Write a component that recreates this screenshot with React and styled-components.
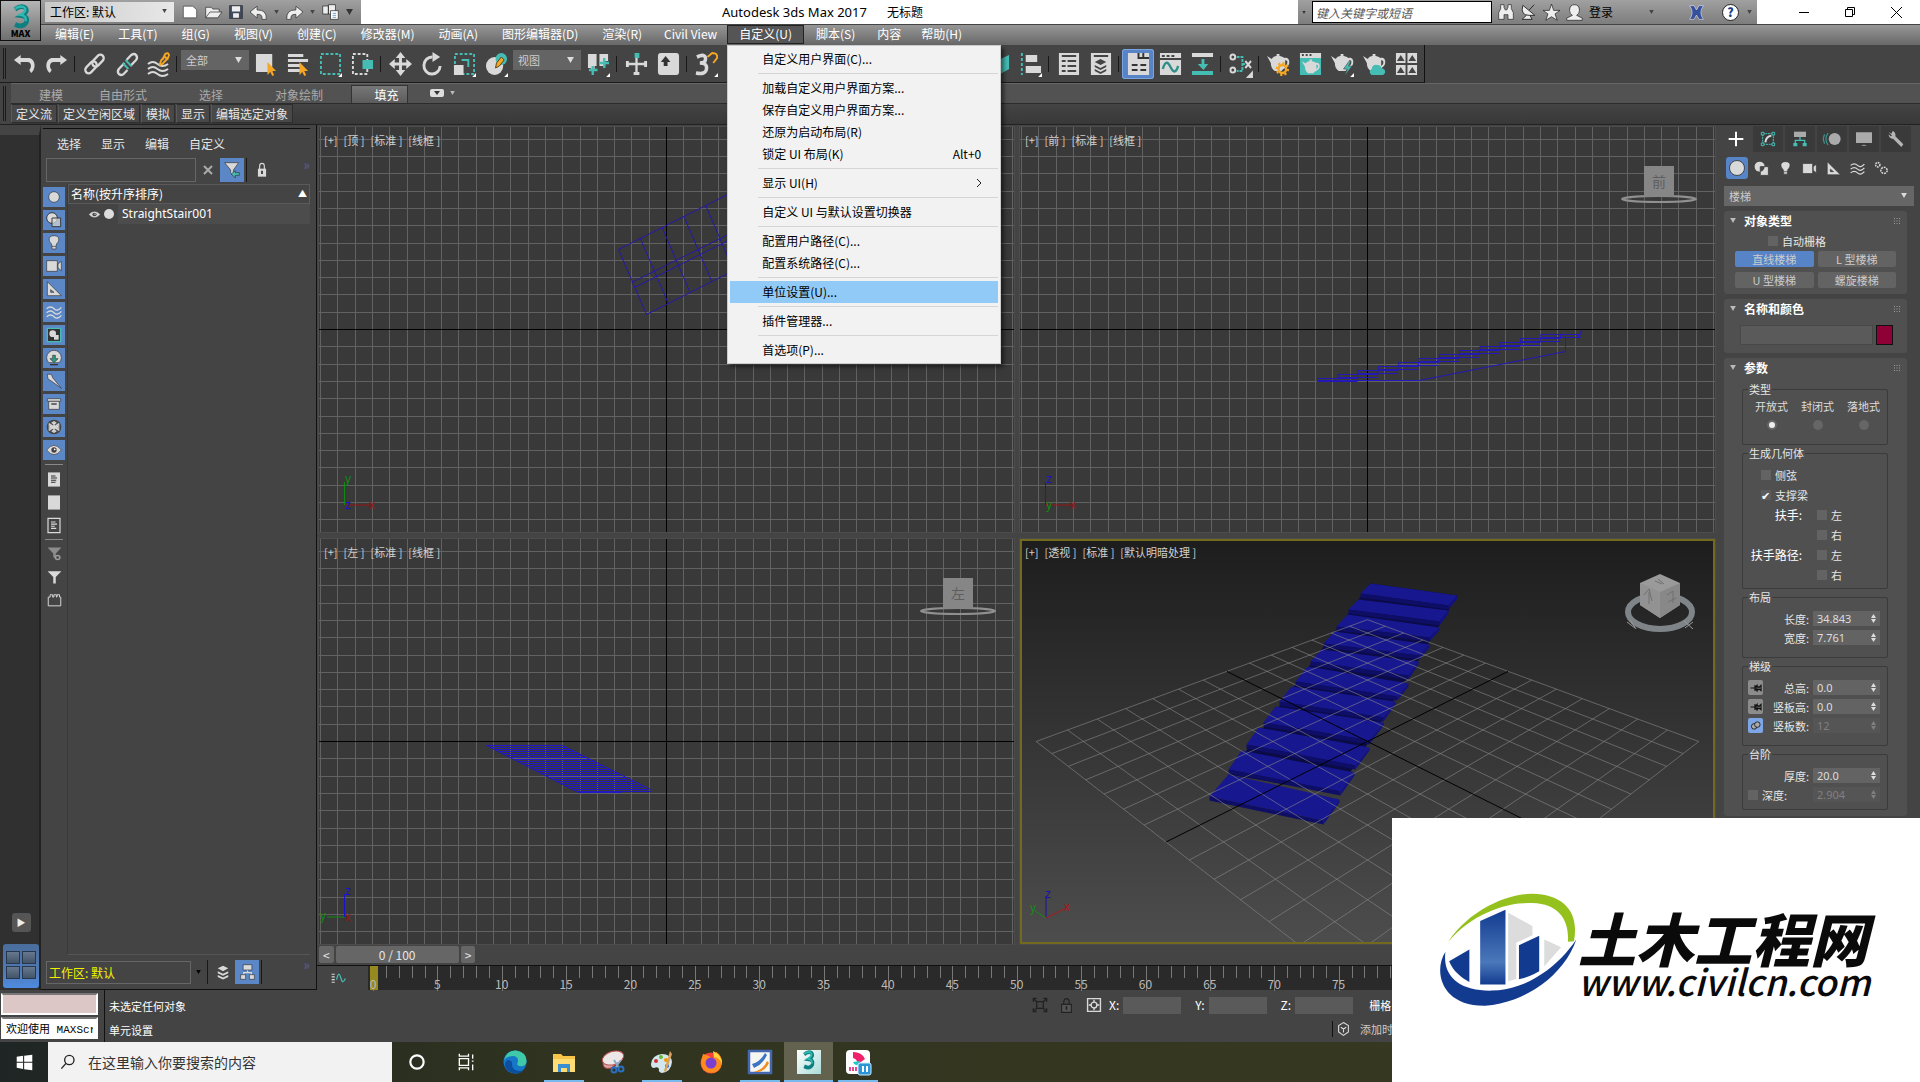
import React, { useState } from 'react'
import styled, { createGlobalStyle, css } from 'styled-components'

const GlobalStyle = createGlobalStyle`
  * {
    box-sizing: border-box;
  }
  body {
    margin: 0;
    background: #444;
    color: #e6e6e6;
    font: 12px/16px 'Noto Sans CJK SC', sans-serif;
  }
  button, input, select {
    font: inherit;
    color: inherit;
    border: 0;
    border-radius: 0;
    padding: 0;
    margin: 0;
    background: none;
    outline: none;
  }
  svg {
    display: block;
    flex: none;
  }
`

const TEAL = '#45bdb5'
const LIGHT = '#d9d9d9'
const ORANGE = '#f5a623'

/* ---------- icons ---------- */

const cursor = <path d="M13 10v13l3-3 2 4 2-1-2-4h4z" fill={ORANGE} />
const corner = <path d="M24 21v4h-4z" fill="#fff" />
const teapot = (
  <path d="M0 4l5 3c1-2 3-3 5-3V2h3v2c2 0 4 1 5 2 4-1 6 2 5 6-1 3-4 4-6 5l-2 2H8C5 17 4 14 4 11zM19 8v6q3-2 2-5z" fill={LIGHT} fillRule="evenodd" />
)

const icons = {
  undo: <path d="M8 3L1 8l7 5V10h7c4 0 5 5 2 8l2 3c6-5 4-15-3-15H8z" fill={LIGHT} />,
  redo: <path d="M16 3l7 5-7 5V10H9c-4 0-5 5-2 8l-2 3C-1 16 1 6 8 6h8z" fill={LIGHT} />,
  link: (
    <g fill="none" stroke={LIGHT} strokeWidth="2.4">
      <rect x="1" y="12" width="14" height="7" rx="3.5" transform="rotate(-45 8 15)" />
      <rect x="9" y="5" width="14" height="7" rx="3.5" transform="rotate(-45 16 9)" />
    </g>
  ),
  unlink: (
    <g fill="none" stroke={LIGHT} strokeWidth="2.4">
      <path d="M10 11l-6 6q-2 3 0 5q3 2 5 0l4-4M12 8l5-5q3-2 5 0q2 3 0 5l-6 6" />
      <path d="M11 8l6 6M8 11l6 6" stroke={TEAL} strokeWidth="2" />
    </g>
  ),
  bind: (
    <g fill="none" strokeWidth="2">
      <path d="M1 12q5-4 10 0t11 0M1 17q5-4 10 0t11 0M1 22q5-4 10 0t11 0" stroke={LIGHT} />
      <path d="M13 13l2-5 3-3q3 0 2 3l-4 4-3 1M16 8l3-6q3-2 4 1l-2 5" stroke={ORANGE} />
    </g>
  ),
  selectObject: <g><path d="M1 2h17v18H1z" fill={LIGHT} />{cursor}</g>,
  selectName: <g><path d="M1 2h16v3H1zM1 7h21v3H1zM1 12h13v3H1zM1 17h13v3H1z" fill={LIGHT} />{cursor}</g>,
  region: <g><path d="M2 2h20v20H2z" fill="none" stroke={TEAL} strokeWidth="2" strokeDasharray="3 2" />{corner}</g>,
  crossing: (
    <g>
      <path d="M2 2h15v20H2z" fill="none" stroke={LIGHT} strokeWidth="2" strokeDasharray="3 2" />
      <path d="M12 8h11v9H12z" fill={TEAL} />
    </g>
  ),
  move: <path d="M12 0l5 6h-3.500v4.500H18V7l6 5-6 5v-3.500h-4.500V18H17l-5 6-5-6h3.500v-4.500H6V17l-6-5 6-5v3.500h4.500V6H7z" fill={LIGHT} />,
  rotate: (
    <g fill="none" stroke={LIGHT} strokeWidth="3">
      <path d="M12 5A8.500 8.500 0 1 0 20 14" />
      <path d="M12 0v10l8-5z" fill={LIGHT} stroke="none" />
    </g>
  ),
  scale: (
    <g>
      <path d="M2 2h20v20H2z" fill="none" stroke={TEAL} strokeWidth="2" strokeDasharray="3 2" />
      <path d="M1 13h10v10H1z" fill={LIGHT} />
      <path d="M9 8h7v7" fill="none" stroke={TEAL} strokeWidth="2" />
      {corner}
    </g>
  ),
  place: (
    <g>
      <circle cx="10" cy="14" r="9" fill={LIGHT} />
      <circle cx="17" cy="7" r="6" fill={TEAL} />
      <path d="M11 16l1-5 5-6 3 3-5 6z" fill={ORANGE} stroke="#5b4310" />
      {corner}
    </g>
  ),
  pivot: (
    <g>
      <path d="M1 2h9v12H8v5H4v-3H1zM13 2h9v7h-3v5h-6z" fill={LIGHT} />
      <path d="M6 14v9M2 18h9M18 6v10M13 11h10" stroke={TEAL} strokeWidth="2.500" />
      {corner}
    </g>
  ),
  manipulate: (
    <g>
      <path d="M12 5v18M1 12h22" stroke={LIGHT} strokeWidth="2.400" />
      <path d="M10 1h5v5h-5z" fill={TEAL} />
      <path d="M1 9h3v6H1zM20 9h3v6h-3zM9 20h6v3H9z" fill={LIGHT} />
    </g>
  ),
  keyboard: (
    <g>
      <rect x="1" y="1" width="22" height="22" rx="3" fill={LIGHT} />
      <path d="M9 4l5 6h-3v4H7v-4H4z" fill="#333" />
    </g>
  ),
  snap: (
    <g>
      <path d="M2 5q9-4 9 2q0 4-6 4q8 0 7 6q-1 6-11 4" fill="none" stroke={LIGHT} strokeWidth="3.600" />
      <path d="M13 5l5-4q6 0 5 5l-4 5" fill="none" stroke={ORANGE} strokeWidth="2" />
      {corner}
    </g>
  ),
  mirror: <g><path d="M1 7l9-4v16l-9 4z" fill={LIGHT} /><path d="M14 7l9-4v14l-9 5z" fill={TEAL} /></g>,
  align: (
    <g>
      <path d="M3 1v22" stroke={TEAL} strokeWidth="2" strokeDasharray="3 2" />
      <path d="M7 3h12v7H7zM7 14h16v7H7z" fill={LIGHT} />
      {corner}
    </g>
  ),
  layers: (
    <g>
      <path d="M2 1h21v22H2z" fill={LIGHT} />
      <path d="M5 4h15M5 9h4M11 9h9M5 14h4M11 14h9M5 19h4M11 19h9" stroke="#444" strokeWidth="2" />
    </g>
  ),
  layerStack: (
    <g>
      <path d="M2 1h21v22H2z" fill={LIGHT} />
      <path d="M5 4h15" stroke="#444" strokeWidth="2" />
      <path d="M12 7l6 3-6 3-6-3zM6 13l6 3 6-3v2l-6 3-6-3zM6 17l6 3 6-3v2l-6 3-6-3z" fill="#444" />
    </g>
  ),
  ribbon: (
    <g>
      <path d="M1 1h22v22H1z" fill={LIGHT} />
      <path d="M12 1v5h11M17 1v5M5 13h6M14 13h6M5 18h6M14 18h6" fill="none" stroke="#333" strokeWidth="2" />
    </g>
  ),
  curve: (
    <g>
      <path d="M1 1h22v22H1z" fill={LIGHT} />
      <path d="M3 4h3M8 4h3M13 4h3M1 7h22" stroke="#444" strokeWidth="2" />
      <path d="M4 17c3-10 6-6 8-2s5 8 8-1" fill="none" stroke="#2f8f88" strokeWidth="2.400" />
    </g>
  ),
  dope: (
    <g>
      <path d="M1 1h22v4H1z" fill={LIGHT} />
      <path d="M1 19h22v4H1zM11 7h3v5h4l-5 6-6-6h4z" fill={TEAL} />
    </g>
  ),
  schematic: (
    <g fill="none" stroke={LIGHT} strokeWidth="2">
      <circle cx="4" cy="5" r="2.500" />
      <circle cx="4" cy="18" r="2.500" />
      <path d="M8 5h6v14H8M14 12h3" stroke={TEAL} strokeDasharray="3 1" />
      <path d="M17 9l6 7M23 9l-6 7" />
      {corner}
    </g>
  ),
  renderSetup: (
    <g>
      {teapot}
      <circle cx="16" cy="17" r="4" fill="none" stroke={ORANGE} strokeWidth="2.500" />
      <circle cx="16" cy="17" r="6" fill="none" stroke={ORANGE} strokeWidth="2" strokeDasharray="2.300 2.300" />
    </g>
  ),
  renderFrame: (
    <g>
      <path d="M1 1h22v22H1z" fill={TEAL} />
      <path d="M1 1h22v5H1z" fill={LIGHT} />
      <path d="M3 3h2M7 3h2M11 3h2" stroke="#444" strokeWidth="2" />
      <g transform="translate(3 6) scale(.8)">{teapot}</g>
    </g>
  ),
  renderBolt: <g>{teapot}<path d="M19 9l-6 8h4l-3 7 8-10h-4l3-5z" fill={TEAL} stroke="#444" strokeWidth=".6" />{corner}</g>,
  renderCloud: <g>{teapot}<path d="M9 23q-4-3 0-6q1-5 6-4q4 0 4 3q5 1 4 5l-2 2z" fill={TEAL} /></g>,
  gallery: (
    <g>
      <path d="M1 1h10v10H1zM13 1h10v10H13zM1 13h10v10H1zM13 13h10v10H13z" fill={LIGHT} />
      <path d="M2 9l4-6 4 6zM14 9l4-6 4 6zM2 21l4-6 4 6zM14 21l4-6 4 6z" fill="#444" />
    </g>
  ),
  // scene explorer filters
  circle: <circle cx="12" cy="12" r="8" fill={LIGHT} stroke="#333" />,
  shapes: <g stroke="#333" strokeWidth="1.400"><circle cx="9" cy="9" r="8" fill={LIGHT} /><path d="M9 9h13v13H9z" fill={LIGHT} fillOpacity=".7" /></g>,
  bulb: <path d="M12 1c10 0 8 9 4 12l-1 4v4H9v-4l-1-4C4 10 2 1 12 1zM9 17h6" fill={LIGHT} stroke="#333" />,
  camera: <path d="M1 4h16v16H1zM18 9l5-4v14l-5-4z" fill={LIGHT} stroke="#333" />,
  ruler: <path d="M2 1l21 21H2zM7 13v4h5z" fill={LIGHT} fillRule="evenodd" stroke="#333" />,
  waves: (
    <g fill="none" stroke={LIGHT} strokeWidth="2">
      <path d="M1 7q6-5 11 0t11-2M1 13q6-5 11 0t11-2M1 19q6-5 11 0t11-2" />
    </g>
  ),
  groups: (
    <g>
      <path d="M2 2h20v20H2z" fill="#333" stroke={TEAL} strokeWidth="2" />
      <circle cx="10" cy="10" r="5" fill={LIGHT} />
      <path d="M12 12h7v7h-7z" fill={LIGHT} />
    </g>
  ),
  xref: (
    <g>
      <path d="M4 19a11 11 0 1 1 16 0z" fill={LIGHT} stroke="#333" />
      <path d="M10 8h4v5h4l-6 6-6-6h4z" fill="#2f9d7f" stroke="#333" />
      <path d="M6 22h12" stroke="#333" strokeWidth="2" />
    </g>
  ),
  bone: <path d="M2 2h6l2 5 13 16L8 12 3 9z" fill={LIGHT} stroke="#333" />,
  container: <g><path d="M2 4h20v4H2z" fill={LIGHT} stroke="#333" /><path d="M4 8h16v12H4z" fill={LIGHT} stroke="#333" /><path d="M8 12h8" stroke="#333" strokeWidth="2" /></g>,
  frozen: (
    <g fill="none" stroke={LIGHT} strokeWidth="2">
      <circle cx="12" cy="12" r="10" fill="#555" stroke="#444" />
      <path d="M12 3v18M4 7l16 10M20 7L4 17M9 5l3 3 3-3M9 19l3-3 3 3M4 10l4 2-4 2M20 10l-4 2 4 2" />
    </g>
  ),
  eye: (
    <g>
      <path d="M1 12q11-14 22 0q-11 14-22 0z" fill={LIGHT} stroke="#333" />
      <circle cx="12" cy="12" r="4" fill="#444" />
      <circle cx="13" cy="11" r="1.300" fill="#fff" />
    </g>
  ),
  listAll: <g><path d="M4 2h16v20H4z" fill={LIGHT} /><path d="M8 7h6M8 10h8M8 13h7M8 16h6" stroke="#333" strokeWidth="1.400" /></g>,
  listNone: <path d="M4 2h16v20H4z" fill={LIGHT} />,
  listInvert: <g fill="none" stroke={LIGHT} strokeWidth="1.600"><path d="M4 2h16v20H4z" /><path d="M8 7h6M8 10h8M8 13h5M8 16h7" /></g>,
  filterOff: <g fill="#8c8c8c"><path d="M1 1h22l-9 10v9l-4-3v-6z" /><circle cx="17" cy="18" r="3.500" fill="none" stroke="#9a9a9a" strokeWidth="2.500" /></g>,
  filter: <path d="M1 2h22l-9 10v11h-4V12z" fill={LIGHT} />,
  brick: <path d="M2 22V7h3V3h4v4h2V3h4v4h1V3h4v4h2v15z" fill="none" stroke={LIGHT} strokeWidth="1.600" />,
  filterSync: <g><path d="M1 1h21l-8 11v8l-4-4v-4z" fill={LIGHT} stroke="#333" /><path d="M11 18l6-5v3h6v4h-6v4z" fill={TEAL} stroke="#333" /></g>,
  lock: <g><path d="M8 11V6q0-4 4-4t4 4v5" fill="none" stroke={LIGHT} strokeWidth="2" /><path d="M5 10h14v12H5z" fill={LIGHT} /><path d="M12 13v5" stroke="#333" strokeWidth="3" /></g>,
  stack: <g fill={LIGHT}><path d="M12 1l9 4-9 5-9-5z" /><path d="M3 10l9 4 9-4v3l-9 4-9-4z" /><path d="M3 16l9 4 9-4v3l-9 4-9-4z" /></g>,
  hierarchy: (
    <g stroke="#333">
      <path d="M12 8v5M6 17v-4h12v4" fill="none" stroke={LIGHT} strokeWidth="2" />
      <path d="M5 1h14v8H5zM1 16h8v7H1zM15 16h8v7h-8z" fill={LIGHT} />
    </g>
  ),
  // command panel
  disc: <circle cx="12" cy="12" r="9" fill={LIGHT} stroke="#333" />,
  shapePair: <g><circle cx="9" cy="9" r="8" fill={LIGHT} /><path d="M10 9h13v14H10z" fill={LIGHT} stroke="#444" strokeWidth="1.500" /><path d="M10 17V9h7q-1 7-7 8z" fill="#444" /></g>,
  plus: <path d="M12 1v22M1 12h22" stroke="#fff" strokeWidth="3" />,
  modify: (
    <g fill="none" stroke={TEAL} strokeWidth="1.500">
      <path d="M4 4h16v16H4z" strokeDasharray="3 1" />
      <path d="M2 2h4v4H2zM18 2h4v4h-4zM2 18h4v4H2zM18 18h4v4h-4z" fill="#383838" />
      <path d="M8 17q1-9 9-10" stroke={LIGHT} strokeWidth="3" />
    </g>
  ),
  tree: <g><path d="M3 1h18v8H3z" fill="#aaa" /><path d="M12 9v5M5 18v-4h14v4" fill="none" stroke={TEAL} strokeWidth="2" /><path d="M2 18h6v5H2zM16 18h6v5h-6z" fill={TEAL} /></g>,
  motion: <g><circle cx="16" cy="12" r="9" fill="#aaa" /><path d="M6 3q-6 9 0 18M1 5q-4 7 0 14" fill="none" stroke="#3c8e88" strokeWidth="2" /></g>,
  display: <path d="M0 2h24v16H0zM8 22q4-3 8 0z" fill="#aaa" />,
  wrench: <path d="M1 1l4 3 2-4q5 2 4 8l12 12-3 4L8 12Q1 11 1 5l3 3 2-1z" fill="#b5b5b5" />,
  systems: <g fill="none" stroke={LIGHT} strokeWidth="2.400"><circle cx="6" cy="6" r="3.500" strokeDasharray="2.500 1.200" /><circle cx="16" cy="15" r="5" strokeDasharray="3 1.500" /></g>,
  pin: <path d="M1 12h9M10 6v12M10 12l4-5v10zM14 8l4 3 4-4v10l-4-3-4 3z" fill="none" stroke="#111" strokeWidth="2.400" />,
  pinned: <g fill="#aaa" stroke="#111" strokeWidth="1.800"><circle cx="9" cy="14" r="6" /><circle cx="16" cy="10" r="6" /></g>,
  // quick access
  newFile: <path d="M2 2h14l6 6v14H2z" fill="#fff" stroke="#333" />,
  open: <path d="M1 22V4h8l2 3h9v4M1 22l6-10h17l-6 10z" fill="#eee" stroke="#222" />,
  save: <g><path d="M1 1h22v22H1z" fill="#3e4a5c" stroke="#222" /><path d="M5 2h14v9H5zM7 14h10v8H7z" fill="#eee" /></g>,
  back: <path d="M10 2v6q14-1 13 15h-6q1-9-7-8v6L0 11z" fill="#eee" stroke="#222" />,
  forward: <path d="M14 2v6Q0 7 1 23h6q-1-9 7-8v6l10-10z" fill="#eee" stroke="#222" />,
  project: <g stroke="#222"><path d="M1 3h8v12H1zM9 1h10v14H9z" fill="#eee" /><path d="M12 10h11v13H12z" fill="#fff" /><path d="M15 14h5M15 17h5M15 20h5" stroke="#3173b5" /></g>,
  binoculars: <path d="M4 1h5v4l2 4h2l2-4V1h5v6l3 6v10h-8v-7h-6v7H1V13l3-6z" fill="#eee" stroke="#222" />,
  dish: <path d="M4 2q-4 15 9 15h8zM13 9l7-8M9 17l-6 6h14l-3-6" fill="#eee" stroke="#222" strokeWidth="1.300" />,
  star: <path d="M12 0l3 9h9l-7 5 3 9-8-5-8 5 3-9-7-5h9z" fill="#eee" stroke="#222" />,
  user: <path d="M12 1q7 0 7 8 0 5-4 7l8 4v3H1v-3l8-4Q5 14 5 9q0-8 7-8z" fill="#eee" stroke="#222" />,
  exchange: <path d="M1 1h7l4 7 4-7h7q-8 11 0 22h-7l-4-7-4 7H1q8-11 0-22z" fill="#35519b" stroke="#dde" />,
  bracket: (
    <g fill="none" stroke="#222" strokeWidth="2"><path d="M7 7h10v10H7zM2 7V2h5M17 2h5v5M22 17v5h-5M7 22H2v-5M3 3l4 4M21 3l-4 4M3 21l4-4M21 21l-4-4" /></g>
  ),
  padlock: <g><path d="M7 11V6q0-5 5-5t5 5v5" fill="none" stroke="#222" strokeWidth="2" /><path d="M3 10h18v13H3z" fill="#555" stroke="#222" strokeWidth="2" /><path d="M12 13v6" stroke="#222" strokeWidth="3" /></g>,
  offset: <g fill="none" stroke={LIGHT} strokeWidth="2.400"><path d="M1 1h22v22H1z" /><circle cx="12" cy="12" r="5" /><path d="M12 3v4M12 17v4M3 12h4M17 12h4" /></g>,
  cube: <path d="M12 1l9 5v11l-9 6-9-6V6zM7 9l5 3 5-3M12 12v6" fill="none" stroke="#ddd" strokeWidth="2" />,
  track: <g><path d="M1 4h5M1 9h5M1 14h5M1 19h5" stroke={LIGHT} strokeWidth="2" /><path d="M9 14c3-16 5-10 7-2s4 8 7 0" fill="none" stroke={TEAL} strokeWidth="2" /></g>,
  // taskbar
  windows: <path d="M1 4l9-1.500V11H1zM11.500 2.300L23 1v10H11.500zM1 12.500h9V21l-9-1.500zM11.500 12.500H23V23l-11.500-1.600z" fill="#fff" />,
  magnifier: <g fill="none" stroke="#222" strokeWidth="2"><circle cx="14" cy="9" r="7" /><path d="M9 14l-7 8" /></g>,
  cortana: <circle cx="12" cy="12" r="8" fill="none" stroke="#fff" strokeWidth="2.600" />,
  taskView: <path d="M4 2v3h11V2M4 22v-3h11v3M4 8h11v8H4zM20 3v5M20 15v7M19 11h2" fill="none" stroke="#fff" strokeWidth="1.600" />,
  edge: (
    <g>
      <circle cx="12" cy="12" r="11.500" fill="#1677c8" />
      <path d="M1 10Q4 0 13 .5 24 2 23.500 12q-1 5-7 4-3 0-2-3 2-6-4-7Q4 6 1 10z" fill="#3fc9a8" />
      <path d="M9 12q-1 8 7 9 4 0 6-3-4 6-10 5.500Q2 22 2 14 4 7 9 12z" fill="#0c4f9e" />
    </g>
  ),
  explorer: <g><path d="M1 4h8l2 2h12v16H1z" fill="#f7c648" /><path d="M1 9h22v13H1z" fill="#ffdc74" /><path d="M6 22v-8h12v8h-3v-4H9v4z" fill="#3a8fd0" /></g>,
  snip: (
    <g>
      <path d="M2 13q0 7 8 5l12-9" fill="#d9a5a5" stroke="#b44" />
      <ellipse cx="12" cy="8" rx="11" ry="6.500" fill="#ece8e8" stroke="#b55" transform="rotate(-18 12 8)" />
      <path d="M13 10l5 8M20 10l-6 8" stroke="#8fa5c0" strokeWidth="2" />
      <circle cx="13" cy="20" r="2.500" fill="none" stroke="#2b6fc0" strokeWidth="2" />
      <circle cx="20" cy="19" r="2.500" fill="none" stroke="#2b6fc0" strokeWidth="2" />
    </g>
  ),
  paint: <g><path d="M1 14Q2 5 12 4q9 0 10 8-1 10-10 11-4-1-3-4-1-3-5-1-3 0-3-4z" fill="#d3e6ee" /><circle cx="6" cy="11" r="2" fill="#c33" /><circle cx="11" cy="7" r="2" fill="#6b3" /><circle cx="16" cy="10" r="2" fill="#e90" /><circle cx="17" cy="16" r="2" fill="#26c" /><path d="M20 1l2 3-6 18-2-1z" fill="#d9a15a" /></g>,
  firefox: <g><circle cx="12" cy="13" r="10.500" fill="#f5423b" /><path d="M4 4q8 2 9 5 6-8 3-8 8 5 7 13-2 9-11 9Q2 22 2 12q1-5 2-8z" fill="#ff8a1e" /><circle cx="12" cy="13" r="5.500" fill="#7a3fd0" /><path d="M14 1q9 4 9 13-3-7-8-7z" fill="#ffd43a" /></g>,
  cad: <g><path d="M1 1h22v22H1z" fill="#f7f7f2" stroke="#4467b0" strokeWidth="2.500" /><path d="M4 14q8-2 13-11l2 2Q15 14 6 18z" fill="#3b74c4" /><path d="M6 22q10-3 13-11l2 2q-4 8-11 9z" fill="#f08c22" /></g>,
  recorder: <g><rect width="24" height="24" rx="4" fill="#fff" /><path d="M7 2q9 0 12 7l-7 5q-1-5-5-6z" fill="#f0226b" /><path d="M3 19h9" stroke="#e54a8f" strokeWidth="4" strokeDasharray="2 1" /><path d="M7 12q2 5 6 2l1-3z" fill="#24c7c7" /><rect x="12" y="13" width="13" height="12" rx="2" fill="#2b95d8" stroke="#cdeafa" /><path d="M17 16v6M21 16v6" stroke="#fff" strokeWidth="2" /></g>,
}

const Glyph = ({ name, w = 22, h = w }) => (
  <svg width={w} height={h} viewBox="0 0 24 24" preserveAspectRatio="none" overflow="visible" aria-hidden="true">
    {icons[name]}
  </svg>
)

const MaxLogo = ({ w, h }) => (
  <svg width={w} height={h} viewBox="0 0 24 32" preserveAspectRatio="none" aria-hidden="true">
    <path d="M4 7Q12 1 18 5q4 5-5 10 9 1 6 9-5 7-15 2" fill="none" stroke="#0d7f80" strokeWidth="6" />
    <path d="M4 6Q12 1 17 5q3 5-6 9 9 1 7 8" fill="none" stroke="#2fb9b1" strokeWidth="3" />
  </svg>
)

/* ---------- title + menu ---------- */

const Page = styled.div`
  display: flex;
  flex-direction: column;
  min-height: 100vh;
`
const Header = styled.header`
  display: grid;
  grid-template-columns: 41px 1fr;
  background: linear-gradient(#999 24px, #6a6a6a 44px);
`
const LogoButton = styled.button`
  display: flex;
  flex-direction: column;
  align-items: center;
  height: 41px;
  padding-top: 3px;
  border: 1px solid #111;
  background: linear-gradient(#b5b5b5, #6f6f6f);
  color: #000;
  font-size: 9px;
  font-weight: 900;
  line-height: 10px;
`
const TitleBar = styled.div`
  display: flex;
  align-items: center;
  height: 24px;
  background: #fff;
  color: #000;
`
const QuickAccess = styled.div`
  display: flex;
  align-items: center;
  gap: 7px;
  width: 320px;
  height: 24px;
  padding: 0 3px;
  background: linear-gradient(#a0a0a0, #7d7d7d);
`
const SelectBox = styled.label`
  position: relative;
  display: block;
  flex: none;
  width: ${({ $w }) => ($w ? `${$w}px` : 'auto')};
  height: 20px;
  margin: 0 1px;
  background: ${({ $bg }) => $bg || '#646464'};
  color: ${({ $color }) => $color || '#ccc'};

  select {
    width: 100%;
    height: 100%;
    padding: 0 5px;
    appearance: none;
  }
  svg {
    position: absolute;
    right: 7px;
    top: 7px;
    pointer-events: none;
  }
`
const ToolSelect = styled(SelectBox)`
  align-self: flex-start;
  margin-top: 5px;
  font-size: 11px;
`
const Arrow = ({ w = 7, fill = '#ddd' }) => (
  <svg width={w} height={w - 1} viewBox="0 0 8 7" aria-hidden="true"><path d="M0 0h8L4 7z" fill={fill} /></svg>
)
const FlatButton = styled.button`
  display: flex;
  align-items: center;
  justify-content: center;
`
const Title = styled.h1`
  display: flex;
  justify-content: center;
  gap: 20px;
  flex: 1;
  margin: 0;
  padding-right: 14px;
  font-size: 12px;
  font-weight: 400;
  line-height: 22px;
  white-space: nowrap;

  span:first-child {
    font-family: 'Noto Sans', sans-serif;
    font-size: 13px;
  }
`
const InfoCenter = styled.div`
  display: flex;
  align-items: center;
  gap: 6px;
  width: 459px;
  height: 24px;
  padding: 0 5px 0 4px;
  background: linear-gradient(#a0a0a0, #7d7d7d);

  input {
    width: 180px;
    height: 22px;
    padding: 0 3px;
    border: 1px solid #000;
    background: #fff;
    font-size: 12px;
    font-style: italic;
  }
  input::placeholder {
    color: #555;
  }
`
const Push = styled.span`
  flex: 1;
`
const Help = styled.button`
  width: 17px;
  height: 17px;
  margin: 0 2px 0 12px;
  border: 1px solid #222;
  border-radius: 50%;
  background: #fff;
  color: #123f8f;
  font-weight: 900;
  line-height: 14px;
`
const WindowButtons = styled.div`
  display: flex;
  width: 163px;
  padding-left: 24px;

  button {
    flex: 1;
    height: 24px;
  }
`
const MenuBar = styled.nav`
  display: flex;
  height: 21px;
  padding-left: 2px;
  border-top: 1px solid #444;
`
const MenuItem = styled.div`
  position: relative;
`
const MenuButton = styled.button`
  height: 19px;
  padding: 0 ${({ $tight }) => ($tight ? 9 : 11)}px 2px;
  border: 1px solid ${({ $open }) => ($open ? '#222' : 'transparent')};
  background: ${({ $open }) => ($open ? '#555' : 'none')};
  color: #fff;
  line-height: 15px;
  white-space: nowrap;
`
const Dropdown = styled.ul`
  position: absolute;
  z-index: 10;
  left: 0;
  top: 20px;
  width: 274px;
  margin: 0;
  padding: 2px;
  border: 1px solid #ccc;
  background: #f2f2f2;
  box-shadow: 3px 3px 4px rgba(0, 0, 0, 0.5);
  list-style: none;
  color: #000;
`
const Command = styled.button`
  display: flex;
  justify-content: space-between;
  align-items: center;
  width: 100%;
  height: 22px;
  padding: 0 17px 0 32px;
  background: ${({ $active }) => ($active ? '#91c9f7' : 'none')};
`
const Rule = styled.li`
  height: 1px;
  margin: 3px 0 3px 28px;
  background: #d5d5d5;
`

/* ---------- toolbars ---------- */

const Toolbar = styled.div`
  display: flex;
  align-items: center;
  align-self: flex-start;
  height: 38px;
  padding: 0 2px 0 3px;
  border-right: 1px solid #111;
  border-bottom: 1px solid #1c1c1c;
  background: #444;
`
const Grip = styled.span`
  align-self: stretch;
  width: 3px;
  margin: 3px 2px 3px 0;
  border: solid #1a1a1a;
  border-width: 0 1px;
`
const Tool = styled.button`
  display: flex;
  align-items: center;
  justify-content: center;
  width: 32px;
  height: 30px;

  ${({ $on }) => $on && css`
    border-radius: 3px;
    background: #5784c6;
    box-shadow: inset 0 0 0 1px #7ba4de;
  `}
`
const Divider = styled.span`
  width: 1px;
  height: ${({ $h }) => $h || 16}px;
  margin: 0 3px 0 2px;
  background: #181818;
`
const HiddenTools = styled.span`
  width: 260px;
`
const Ribbon = styled.div`
  display: flex;
  height: 42px;
  padding-left: 3px;
  border-bottom: 1px solid #222;
`
const RibbonRows = styled.div`
  flex: 1;
  margin-left: 3px;
`
const RibbonTabs = styled.div`
  display: flex;
  align-items: flex-end;
  height: 21px;
  padding-left: 4px;
  border-top: 1px solid #666;
  border-bottom: 1px solid #2c2c2c;
  background: #525252;
  color: #aaa;
`
const RibbonTab = styled.button`
  width: ${({ $w }) => $w}px;
  height: 18px;
  line-height: 17px;

  ${({ $on }) => $on && css`
    padding-left: 14px;
    border: 1px solid #333;
    border-bottom: 0;
    background: linear-gradient(#777, #5c5c5c);
    color: #fff;
  `}
`
const RibbonMore = styled.button`
  display: flex;
  align-items: center;
  gap: 6px;
  height: 20px;
  margin-left: 22px;
`
const RibbonPanels = styled.div`
  display: flex;
  gap: 1px;
  height: 20px;
  background: linear-gradient(#444, #383838);

  button {
    height: 19px;
    padding: 0 4px;
    border: 1px solid #2e2e2e;
    border-left-color: #5a5a5a;
    background: #484848;
    line-height: 16px;
    white-space: nowrap;
  }
`

/* ---------- work area ---------- */

const Work = styled.main`
  display: flex;
  flex: 1;
`
const Strip = styled.aside`
  display: flex;
  flex-direction: column;
  justify-content: flex-end;
  align-items: center;
  gap: 12px;
  width: 41px;
  padding: 0 0 2px 3px;
  border-top: 10px solid #444;
  border-right: 2px solid #222;
  background: #303030;
`
const PlayButton = styled.button`
  width: 19px;
  height: 19px;
  border-radius: 3px;
  background: #555;
  font-size: 9px;
  line-height: 18px;
  color: #eee;
`
const LayoutButton = styled.button`
  display: grid;
  grid-template-columns: 1fr 1fr;
  gap: 2px;
  width: 36px;
  height: 44px;
  padding: 7px 3px 9px;
  border-radius: 3px;
  background: linear-gradient(#4a6d9b, #5079b4 60%, #4d8be0);

  i {
    border: 1px solid #26374e;
    background: linear-gradient(#66798f, #445468);
  }
`
const Explorer = styled.section`
  display: flex;
  flex-direction: column;
  width: 276px;
  padding: 3px 6px 3px 2px;
  border: solid #111;
  border-width: 0 1px 1px 0;
`
const ExplorerMenu = styled.div`
  display: flex;
  gap: 20px;
  padding: 7px 14px 6px;
  border-top: 1px solid #0e0e0e;
`
const Row = styled.div`
  display: flex;
  align-items: center;
`
const SearchField = styled.input`
  width: 150px;
  height: 24px;
  margin-left: 3px;
  border: 1px solid #666;
`
const Toggle = styled.button`
  display: flex;
  align-items: center;
  justify-content: center;
  width: ${({ $w }) => $w || 22}px;
  height: ${({ $h }) => $h || 20}px;
  background: ${({ $on }) => ($on ? '#5b87c6' : 'none')};
`
const More = styled.button`
  margin-left: auto;
  align-self: flex-start;
  color: #5c5c96;
  font-size: 14px;
  line-height: 12px;
`
const ExplorerBody = styled.div`
  display: flex;
  flex: 1;
  gap: 2px;
  padding-top: 2px;
`
const FilterColumn = styled.div`
  display: flex;
  flex-direction: column;
  gap: 3px;
  padding-top: 3px;

  hr {
    width: 18px;
    height: 1px;
    margin: 1px 0 1px 2px;
    border: 0;
    background: #888;
  }
`
const Tree = styled.table`
  flex: 1;
  align-self: stretch;
  display: flex;
  flex-direction: column;
  border-left: 1px solid #383838;
  border-bottom: 1px solid #555;

  thead, tbody, tr, th {
    display: block;
    padding: 0;
    text-align: left;
    font-weight: 400;
  }
  th {
    display: flex;
    justify-content: space-between;
    height: 20px;
    padding: 0 2px;
    border: 1px solid #5a5a5a;
    color: #fff;
    line-height: 18px;
  }
  th span {
    font-size: 9px;
  }
  tbody tr {
    display: flex;
    align-items: center;
    padding-left: 16px;
  }
  td {
    display: flex;
    align-items: center;
    gap: 3px;
    height: 20px;
    padding: 0 4px;
    font: 12px/20px 'Noto Sans', sans-serif;
    color: #fff;
  }
  td + td {
    flex: 1;
    background: #4c4c4c;
  }
`
const SceneFooter = styled.div`
  display: flex;
  align-items: center;
  height: 31px;
  padding: 3px 0 0 3px;
`
const WorkspaceName = styled.input`
  width: 145px;
  height: 23px;
  padding: 0 2px;
  border: 1px solid #666;
  color: #f2f200;
`

const Centre = styled.section`
  display: flex;
  flex-direction: column;
  flex: 1;
  min-width: 0;
`
const Views = styled.div`
  display: grid;
  grid-template: 1fr 1fr / 1fr 1fr;
  gap: 7px 6px;
  flex: 1;
  padding: 2px 2px 1px 2px;
`
const View = styled.div`
  position: relative;
  overflow: hidden;
  min-height: 200px;
  background: ${({ $shaded }) => ($shaded ? 'linear-gradient(#1d1d1d, #4d4d4d)' : '#393939')};
  box-shadow: 0 0 0 1px #4c4c4c;
`
const Canvas = styled.svg`
  position: absolute;
  inset: 0;
  width: 100%;
  height: 100%;
`
const ActiveFrame = styled.div`
  position: absolute;
  inset: 0;
  border: 2px solid #736a20;
`
const ViewLabel = styled.div`
  position: absolute;
  left: 5px;
  top: 5px;
  display: flex;
  gap: 6px;
  color: #d0d0d0;
  font-size: 11px;
  white-space: pre;
`
const CubeSpot = styled.div`
  position: absolute;
  top: ${({ $top }) => $top || 38}px;
  right: 16px;
`
const AxisSpot = styled.div`
  position: absolute;
  left: 0;
  bottom: 14px;
`

const STEP = 17.3

const Grid = () => {
  const lines = []
  for (let i = -60; i <= 60; i++) {
    if (i === 0) continue
    const p = Math.round(i * STEP)
    lines.push(<path key={i} d={`M${p} -900V900M-1200 ${p}H1200`} />)
  }
  return (
    <g shapeRendering="crispEdges">
      <g stroke="#626262">{lines}</g>
      <path d="M0 -900V900M-1200 0H1200" stroke="#000" />
    </g>
  )
}

const TopStair = () => {
  const rungs = []
  for (let i = 0; i < 12; i++) {
    const x = i * 21.8
    const y = i * -11
    rungs.push(<path key={i} d={`M${x - 48} ${y - 80}l28 65`} />)
  }
  return (
    <g fill="none" stroke="#2319a8">
      {rungs}
      <path d="M-48 -80L194 -202M-35 -47L207 -167M-32 -42L207 -162M-20 -15L222 -137" />
    </g>
  )
}

const FrontStair = () => {
  const steps = []
  for (let i = 0; i < 12; i++) {
    const x = -50 + i * 20.3
    const y = 49 - i * 4
    steps.push(<path key={i} d={`M${x} ${y}h40v-4M${x} ${y}v3h40`} />)
  }
  return (
    <g fill="none" stroke="#2319b8">
      {steps}
      <path d="M-50 51H52L198 22V8H211V5" />
    </g>
  )
}

const LeftStair = () => {
  const steps = []
  for (let i = 0; i < 12; i++) {
    const x = -180 + i * 7.8
    const y = 4 + i * 4
    steps.push(<path key={i} d={`M${x} ${y}h76M${x + 5} ${y + 2}h74`} />)
  }
  return (
    <g fill="none" stroke="#2018c4">
      {steps}
      <path d="M-180 4L-88 51H-45M-104 4L-16 48" />
    </g>
  )
}

// ground plane: l runs left-right and d away from the viewer
const project = (u, v) => {
  const l = (u - v) / 2
  const d = (u + v) / 2
  const k = 1 + 0.356 * d
  return `${(331.3 * l) / k} ${(-165.2 * d) / k}`
}

const Ground = () => {
  const lines = []
  for (let i = -7; i <= 7; i++) {
    if (i === 0) continue
    const t = i / 7
    lines.push(<path key={i} d={`M${project(t, -1)}L${project(t, 1)}M${project(-1, t)}L${project(1, t)}`} />)
  }
  return (
    <g>
      <g stroke="#8a8a8a" strokeOpacity=".75" strokeWidth=".8">{lines}</g>
      <path d={`M${project(0, -1)}L${project(0, 1)}M${project(-1, 0)}L${project(1, 0)}`} stroke="#000" />
    </g>
  )
}

// back-left, back-right, front-right, front-left of every tread
const treads = [
  [3, -158, 90, -146, 81, -136, -7, -148],
  [-9, -142, 81, -131, 72, -120, -19, -132],
  [-20, -127, 72, -114, 62, -104, -31, -115],
  [-33, -110, 62, -97, 52, -86, -44, -98],
  [-46, -92, 51, -80, 41, -66, -57, -80],
  [-60, -75, 41, -58, 30, -45, -72, -60],
  [-76, -55, 28, -40, 16, -24, -88, -40],
  [-92, -35, 16, -19, 2, -1, -104, -19],
  [-109, -14, 2, 6, -12, 24, -121, 3],
  [-126, 9, -13, 31, -27, 50, -139, 28],
  [-139, 33, -28, 58, -44, 79, -158, 55],
]

const ShadedStair = () => (
  <g>
    <path d="M3 -158L90 -146L-30 52L-139 33z" fill="#0b0b45" />
    {treads.map(([a, b, c, d, e, f, g, h]) => (
      <g key={b}>
        <path d={`M${a} ${b}L${c} ${d}L${e} ${f}L${g} ${h}z`} fill="#171790" />
        <path d={`M${g} ${h}L${e} ${f}v4L${g} ${h + 4}z`} fill="#0e0e66" />
        <path d={`M${e} ${f}L${c} ${d}v3L${e} ${f + 4}z`} fill="#131380" />
      </g>
    ))}
  </g>
)

const FlatCube = ({ text }) => (
  <svg width="80" height="44" viewBox="0 0 80 44" aria-hidden="true">
    <ellipse cx="40" cy="34" rx="37" ry="3" fill="none" stroke="#909090" strokeWidth="2" />
    <path d="M25 1h30v31H25z" fill="#868686" />
    <text x="40" y="22" textAnchor="middle" fontSize="14" fill="#5e5e5e">{text}</text>
  </svg>
)

const SolidCube = () => (
  <svg width="78" height="64" viewBox="0 0 78 64" aria-hidden="true">
    <ellipse cx="39" cy="40" rx="32" ry="17" fill="none" stroke="#7e8487" strokeWidth="6" />
    <path d="M6 50l8 6M9 48l6 9M64 56l8-6M63 49l9 8" stroke="#999" />
    <path d="M39 2l20 9v22L39 46 19 33V11z" fill="#9a9a9a" />
    <path d="M39 20l20-9v22L39 46z" fill="#888" />
    <path d="M39 20L19 11v22l20 13z" fill="#929292" />
    <path d="M23 23l5-6 3 12M28 20v12M46 23l6-4v12M47 30l8-4M34 9l7 3M37 7l6 5" stroke="#707070" fill="none" />
  </svg>
)

const axisColor = { x: '#9a1414', y: '#0f8a12', z: '#1a14c8' }

const Axis = ({ up, right, origin, left }) => (
  <svg width="64" height="50" viewBox="0 0 64 50" fontSize="12" fontFamily="Liberation Sans, sans-serif" aria-hidden="true">
    {right && <path d="M26 37H52" stroke={axisColor[right]} />}
    {right && <text x="50" y="41" fill={axisColor[right]}>{right}</text>}
    {left && <path d="M8 37H26" stroke={axisColor[left]} />}
    {left && <text x="1" y="40" fill={axisColor[left]}>{left}</text>}
    <path d="M25.500 14V37" stroke={axisColor[up]} />
    <text x="26" y="15" fill={axisColor[up]}>{up}</text>
    <text x="26" y="41" fill={axisColor[origin]}>{origin}</text>
  </svg>
)

const PerspAxis = () => (
  <svg width="64" height="50" viewBox="0 0 64 50" fontSize="12" fontFamily="Liberation Sans, sans-serif" aria-hidden="true">
    <path d="M26 38V16" stroke="#1a14a8" />
    <path d="M26 38l20-10" stroke="#b01818" />
    <path d="M26 38l-11-7" stroke="#148a1a" />
    <text x="25" y="18" fill="#1a14a8">z</text>
    <text x="44" y="31" fill="#b01818">x</text>
    <text x="10" y="32" fill="#148a1a">y</text>
  </svg>
)

const Viewport = ({ labels, shaded, cube, axis, children }) => (
  <View $shaded={shaded}>
    <Canvas aria-hidden="true">
      <svg x="50%" y="50%" overflow="visible">{children}</svg>
    </Canvas>
    <ViewLabel>{labels.map((l) => <span key={l}>{l}</span>)}</ViewLabel>
    {cube && <CubeSpot>{cube}</CubeSpot>}
    {shaded && <CubeSpot $top={33}><SolidCube /></CubeSpot>}
    <AxisSpot>{axis}</AxisSpot>
    {shaded && <ActiveFrame />}
  </View>
)

const TimeSlider = styled.div`
  display: flex;
  gap: 2px;
  height: 20px;
  padding: 1px 0 1px 2px;

  button {
    height: 17px;
    padding: 0 4px;
    border-radius: 2px;
    background: #666;
    line-height: 16px;
  }
  button:nth-child(2) {
    width: 123px;
  }
`
const TrackBar = styled.div`
  display: flex;
  height: 25px;
  border-top: 1px solid #111;
`
const TrackButton = styled.button`
  width: 51px;
  padding-left: 14px;
`
const Ruler = styled.div`
  display: flex;
  flex: 1;
  padding: 0 44px 0 5px;
  background: #2a2a2a;
`
const Tick = styled.span`
  position: relative;
  flex: 1;
  height: ${({ $major }) => ($major ? 25 : 12)}px;
  border-left: 1px solid #777;

  span {
    position: absolute;
    left: -16px;
    top: 11px;
    width: 30px;
    text-align: center;
    line-height: 14px;
    color: #bbb;
  }
`
const Playhead = styled.i`
  position: absolute;
  left: -4px;
  top: 0;
  width: 8px;
  height: 24px;
  background: #96891f;
`

/* ---------- command panel ---------- */

const CommandPanel = styled.aside`
  width: 203px;
  padding: 1px 5px 0 6px;
  font-size: 11px;
  line-height: 14px;
`
const Tabs = styled.div`
  display: grid;
  grid-template-columns: repeat(6, 30px);
  gap: 2px;
  margin-left: -2px;
`
const Tab = styled.button`
  display: flex;
  align-items: center;
  justify-content: center;
  height: 26px;
  background: ${({ $on }) => ($on ? '#444' : '#3a3a3a')};
`
const Categories = styled.div`
  display: flex;
  gap: 2px;
  margin: 5px 0 7px 3px;

  button {
    display: flex;
    align-items: center;
    justify-content: center;
    width: 22px;
    height: 22px;
    border-radius: 3px;
  }
  button:first-child {
    background: #5784c6;
  }
`
const Rollout = styled.section`
  width: 183px;
  margin: 5px 0 0 1px;
  padding: 0 11px 6px 11px;
  border-radius: 3px;
  background: #505050;
`
const RolloutHead = styled.h2`
  display: flex;
  align-items: center;
  gap: 8px;
  height: 19px;
  margin: 0 -4px 0 -5px;
  color: #fff;
  font-size: 12px;
  font-weight: 700;

  span {
    flex: 1;
  }
`
const Check = styled.label`
  display: flex;
  align-items: center;
  gap: 4px;
  height: ${({ $h }) => $h || 20}px;
  margin-left: ${({ $left }) => $left || 0}px;

  input {
    appearance: none;
    width: 10px;
    height: 10px;
    background: #636363;
  }
  input:checked {
    background: #5c5c5c;
    position: relative;
  }
  input:checked::after {
    content: '✔';
    position: absolute;
    left: 0;
    font-size: 11px;
    line-height: 10px;
    color: #fff;
  }
`
const TypeGrid = styled.div`
  display: grid;
  grid-template-columns: 1fr 1fr;
  gap: 5px 4px;

  button {
    height: 16px;
    border-radius: 2px;
    background: #636363;
    color: #ccc;
    line-height: 15px;
  }
  button:first-child {
    background: #5784c6;
  }
`
const NameRow = styled.div`
  display: flex;
  gap: 3px;
  padding: 7px 3px 2px 5px;

  input:first-child {
    flex: 1;
    min-width: 0;
    height: 20px;
    border: 1px solid #484848;
    background: #5a5a5a;
  }
`
const Swatch = styled.input`
  && {
    appearance: none;
    width: 17px;
    height: 20px;
    border: 1px solid #111;
    background: #8f0037;
  }
  &::-webkit-color-swatch-wrapper {
    padding: 0;
  }
  &::-webkit-color-swatch {
    border: 0;
  }
`
const Groups = styled.div`
  display: flex;
  flex-direction: column;
  gap: 2px;
  padding: 6px 8px 0 7px;
`
const Group = styled.fieldset`
  min-width: 0;
  margin: 0;
  padding: ${({ $pt }) => $pt || 6}px 7px ${({ $pb }) => $pb}px 5px;
  border: 1px solid #3b3b3b;
  border-radius: 2px;

  legend {
    padding: 0 1px;
    line-height: 12px;
    height: 12px;
  }
`
const Radios = styled.div`
  display: flex;
  justify-content: space-between;
  padding-left: 7px;

  label {
    display: flex;
    flex-direction: column;
    align-items: center;
    gap: 7px;
    color: #ddd;
  }
  input {
    appearance: none;
    width: 10px;
    height: 10px;
    border-radius: 50%;
    background: #666;
  }
  input:checked {
    border: 2px solid #666;
    background: #eee;
  }
`
const RailRow = styled.div`
  display: flex;
  align-items: center;
  justify-content: flex-end;
  gap: 5px;
  height: 20px;
  padding-right: 38px;

  & > span {
    margin-right: 10px;
    color: #fff;
    font-size: 12px;
    white-space: nowrap;
  }
`
const FieldRow = styled.div`
  display: flex;
  align-items: center;
  gap: 4px;
  height: 19px;

  & > label:not(:first-child:has(input)) {
    flex: 1;
    text-align: right;
  }
`
const Spinner = styled.span`
  display: flex;
  align-items: center;
  justify-content: space-between;
  width: 67px;
  height: 15px;
  padding: 0 4px;
  background: ${({ $off }) => ($off ? '#555' : '#636363')};
  color: ${({ $off }) => ($off ? '#808080' : '#ddd')};

  input {
    width: 48px;
    font: 11px/14px 'Noto Sans', sans-serif;
  }
`
const Pin = styled.button`
  display: flex;
  align-items: center;
  justify-content: center;
  width: 15px;
  height: 15px;
  border-radius: 2px;
  background: ${({ $on }) => ($on ? '#7ea6e6' : '#8c8c8c')};
`

const Field = ({ id, label, value, off, before }) => (
  <FieldRow>
    {before}
    <label htmlFor={id}>{label}</label>
    <Spinner $off={off}>
      <input id={id} defaultValue={value} disabled={off} />
      <svg width="5" height="9" viewBox="0 0 5 9" aria-hidden="true">
        <path d="M0 4h5L2.500 0zM0 5h5L2.500 9z" fill="currentColor" />
      </svg>
    </Spinner>
  </FieldRow>
)

const Panel = ({ title, children }) => (
  <Rollout>
    <RolloutHead>
      <Arrow w={6} fill="#bbb" />
      <span>{title}</span>
      <svg width="6" height="6" aria-hidden="true">
        <path d="M.5 0v6M3 0v6M5.500 0v6" stroke="#999" strokeDasharray="1 1.500" />
      </svg>
    </RolloutHead>
    {children}
  </Rollout>
)

/* ---------- status + taskbar ---------- */

const Status = styled.footer`
  display: flex;
  height: 52px;
  font-size: 11px;
`
const Listener = styled.div`
  display: flex;
  flex-direction: column;
  gap: 2px;
  width: 99px;
  padding: 3px 0 3px 1px;

  input {
    width: 97px;
    height: 22px;
    padding: 0 3px;
    border: 2px solid #fff;
    border-top-color: #777;
    background: #fff;
    color: #000;
    font: 11px/16px 'Liberation Mono', 'Noto Sans CJK SC', monospace;
  }
  input:first-child {
    background: #dcc6c6;
  }
`
const Prompts = styled.div`
  flex: 1;
  display: flex;
  flex-direction: column;
  justify-content: space-between;
  margin-left: 5px;
  padding: 8px 4px 2px;
  border-left: 1px solid #111;
  color: #fff;

  p {
    margin: 0;
    height: 18px;
  }
`
const Coordinates = styled.div`
  display: flex;
  flex-direction: column;
  width: 892px;
  padding-top: 5px;
  color: #fff;
`
const CoordRow = styled.div`
  display: flex;
  align-items: center;
  gap: 4px;
  height: 20px;
  font-size: 12px;

  input + label {
    margin-left: 10px;
  }
  label + input {
    width: 58px;
    height: 17px;
    background: #5a5a5a;
  }
`
const IconSlot = styled.button`
  display: flex;
  justify-content: center;
  width: 23px;
`
const GridSize = styled.span`
  margin-left: 12px;
  font-size: 11px;
`
const TagRow = styled.div`
  display: flex;
  align-items: center;
  gap: 5px;
  margin: 6px 0 0 304px;
  padding-left: 4px;
  border-left: 1px solid #111;

  button {
    padding-left: 5px;
    color: #ccc;
  }
`
const Taskbar = styled.div`
  display: flex;
  height: 40px;
  background: linear-gradient(90deg, #1e2524, #30341f 30%, #3b3a22);
`
const StartButton = styled.button`
  display: flex;
  align-items: center;
  justify-content: center;
  width: 48px;
`
const TaskSearch = styled.label`
  display: flex;
  align-items: center;
  gap: 12px;
  width: 344px;
  padding-left: 12px;
  background: #f2f2f2;

  input {
    flex: 1;
    min-width: 0;
    font-size: 14px;
    color: #222;
  }
  input::placeholder {
    color: #333;
    opacity: 1;
  }
`
const Task = styled.button`
  display: flex;
  align-items: center;
  justify-content: center;
  width: 49px;
  background: ${({ $active }) => ($active ? '#62624f' : 'none')};

  ${({ $running, $active }) => $running && css`
    background-image: linear-gradient(#76b9ed, #76b9ed);
    background-size: ${$active ? '100%' : '40px'} 2px;
    background-position: bottom;
    background-repeat: no-repeat;
  `}
`
const MaxTile = styled.span`
  display: flex;
  justify-content: center;
  width: 24px;
  height: 24px;
  background: linear-gradient(135deg, #fff, #a9dcd8);
`

/* ---------- brand card ---------- */

const BrandCard = styled.aside`
  position: fixed;
  z-index: 20;
  right: 0;
  bottom: 0;
  display: flex;
  width: 528px;
  height: 264px;
  padding: 73px 0 0 46px;
  background: #fff;
  color: #0a0a0a;
`
const BrandText = styled.div`
  padding-top: 17px;
  font-style: italic;
  white-space: nowrap;

  strong {
    display: block;
    font-size: 58px;
    font-weight: 900;
    line-height: 58px;
  }
  a {
    display: block;
    color: inherit;
    text-decoration: none;
    font-size: 36px;
    font-weight: 500;
    line-height: 28px;
  }
`

const BrandMark = () => (
  <svg width="140" height="117" viewBox="170 240 415 350" preserveAspectRatio="none" aria-hidden="true">
    <defs>
      <linearGradient id="tower" x1="0" y1="0" x2="0" y2="1">
        <stop offset="0" stopColor="#123b8f" />
        <stop offset=".7" stopColor="#4a78ba" />
        <stop offset="1" stopColor="#123b8f" />
      </linearGradient>
    </defs>
    <path d="M200 392C260 300 370 248 450 248C540 250 590 300 573 390L555 392C560 330 530 278 450 276C370 272 270 310 200 392z" fill="#95c11f" />
    <path d="M378 305L450 345V372L402 395V503L378 510zM485 385L535 408L485 465z" fill="#dcdcdc" />
    <path d="M203 450L263 415V512C240 500 215 480 203 450zM410 402L470 374V480Q440 498 410 504z" fill="#123b8f" />
    <path d="M295 330L370 296V520H295z" fill="url(#tower)" />
    <path d="M192 422C155 480 180 585 310 583C430 575 545 490 580 385C530 460 440 535 330 538C240 540 182 500 192 422z" fill="#123b8f" />
  </svg>
)

/* ---------- data ---------- */

const menusBefore = ['编辑(E)', '工具(T)', '组(G)', '视图(V)', '创建(C)', '修改器(M)', '动画(A)', '图形编辑器(D)', '渲染(R)', 'Civil View']
const menusAfter = ['脚本(S)', '内容', '帮助(H)']
const tightMenus = ['Civil View', '内容', '帮助(H)']

const commands = [
  { label: '自定义用户界面(C)...' },
  null,
  { label: '加载自定义用户界面方案...' },
  { label: '保存自定义用户界面方案...' },
  { label: '还原为启动布局(R)' },
  { label: '锁定 UI 布局(K)', extra: 'Alt+0' },
  null,
  { label: '显示 UI(H)', sub: true },
  null,
  { label: '自定义 UI 与默认设置切换器' },
  null,
  { label: '配置用户路径(C)...' },
  { label: '配置系统路径(C)...' },
  null,
  { label: '单位设置(U)...', active: true },
  null,
  { label: '插件管理器...' },
  null,
  { label: '首选项(P)...' },
]

const filters = ['circle', 'shapes', 'bulb', 'camera', 'ruler', 'waves', 'groups', 'xref', 'bone', 'container', 'frozen', 'eye']
const frames = Array.from({ length: 101 }, (_, i) => i)
const LAST_LABEL = 75

const tasks = [
  { icon: 'cortana' },
  { icon: 'taskView' },
  { icon: 'edge' },
  { icon: 'explorer', running: true },
  { icon: 'snip' },
  { icon: 'paint', running: true },
  { icon: 'firefox' },
  { icon: 'cad', running: true },
  { icon: 'max', running: true, active: true },
  { icon: 'recorder', running: true },
]

const Tools = ({ names, on }) => names.map((n) => (
  <Tool key={n} aria-label={n} $on={n === on}><Glyph name={n} w={23} h={24} /></Tool>
))

const Menus = ({ items }) => items.map((m) => (
  <MenuItem key={m}><MenuButton $tight={tightMenus.includes(m)}>{m}</MenuButton></MenuItem>
))

const App = () => {
  const [open, setOpen] = useState(true)

  return (
    <Page>
      <GlobalStyle />
      <Header>
        <LogoButton aria-label="MAX">
          <MaxLogo w={18} h={25} />
          MAX
        </LogoButton>
        <div>
          <TitleBar>
            <QuickAccess>
              <SelectBox $w={129} $bg="linear-gradient(90deg, #c9c9c9, #e8e8e8)" $color="#000">
                <select aria-label="工作区"><option>工作区: 默认</option></select>
                <Arrow w={5} fill="#444" />
              </SelectBox>
              <FlatButton aria-label="new"><Glyph name="newFile" w={16} h={14} /></FlatButton>
              <FlatButton aria-label="open"><Glyph name="open" w={17} h={14} /></FlatButton>
              <FlatButton aria-label="save"><Glyph name="save" w={14} /></FlatButton>
              <FlatButton aria-label="undo"><Glyph name="back" w={17} h={15} /></FlatButton>
              <Arrow w={5} fill="#444" />
              <FlatButton aria-label="redo"><Glyph name="forward" w={17} h={15} /></FlatButton>
              <Arrow w={5} fill="#444" />
              <FlatButton aria-label="project"><Glyph name="project" w={17} h={16} /></FlatButton>
              <Arrow w={7} fill="#333" />
            </QuickAccess>
            <Title><span>Autodesk 3ds Max 2017</span><span>无标题</span></Title>
            <InfoCenter>
              <Arrow w={4} fill="#333" />
              <input aria-label="搜索" placeholder="键入关键字或短语" />
              <Glyph name="binoculars" w={16} />
              <Glyph name="dish" w={17} h={16} />
              <Glyph name="star" w={17} />
              <Glyph name="user" w={17} />
              <FlatButton>登录</FlatButton>
              <Push />
              <Arrow w={5} fill="#444" />
              <Push />
              <Glyph name="exchange" w={15} />
              <Help>?</Help>
              <Arrow w={5} fill="#444" />
            </InfoCenter>
            <WindowButtons>
              <FlatButton aria-label="minimize"><svg width="10" height="10"><path d="M0 5.500h10" stroke="#000" /></svg></FlatButton>
              <FlatButton aria-label="restore"><svg width="10" height="10"><path d="M.5 2.500h7v7h-7zM2.500 2.500v-2h7v7h-2" fill="none" stroke="#000" /></svg></FlatButton>
              <FlatButton aria-label="close"><svg width="11" height="11"><path d="M0 0l11 11M11 0L0 11" stroke="#000" /></svg></FlatButton>
            </WindowButtons>
          </TitleBar>
          <MenuBar>
            <Menus items={menusBefore} />
            <MenuItem>
              <MenuButton $open={open} onClick={() => setOpen(!open)}>自定义(U)</MenuButton>
              {open && (
                <Dropdown>
                  {commands.map((c, i) => (c ? (
                    <li key={c.label}>
                      <Command $active={c.active}>
                        {c.label}
                        {c.extra && <span>{c.extra}</span>}
                        {c.sub && <svg width="10" height="8"><path d="M6 0l4 4-4 4" fill="none" stroke="#222" /></svg>}
                      </Command>
                    </li>
                  ) : <Rule key={i} />))}
                </Dropdown>
              )}
            </MenuItem>
            <Menus items={menusAfter} />
          </MenuBar>
        </div>
      </Header>

      <Toolbar>
        <Grip />
        <Tools names={['undo', 'redo']} />
        <Divider />
        <Tools names={['link', 'unlink', 'bind']} />
        <Divider />
        <ToolSelect $w={68}>
          <select aria-label="选择过滤器"><option>全部</option></select>
          <Arrow />
        </ToolSelect>
        <Tools names={['selectObject', 'selectName', 'region', 'crossing']} />
        <Divider />
        <Tools names={['move', 'rotate', 'scale', 'place']} />
        <ToolSelect $w={68}>
          <select aria-label="参考坐标系"><option>视图</option></select>
          <Arrow />
        </ToolSelect>
        <Tools names={['pivot']} />
        <Divider />
        <Tools names={['manipulate', 'keyboard']} />
        <Divider />
        <Tools names={['snap']} />
        <HiddenTools />
        <Tools names={['mirror', 'align']} />
        <Divider />
        <Tools names={['layers', 'layerStack']} />
        <Divider />
        <Tools names={['ribbon', 'curve', 'dope']} on="ribbon" />
        <Divider />
        <Tools names={['schematic']} />
        <Divider />
        <Tools names={['renderSetup', 'renderFrame', 'renderBolt', 'renderCloud', 'gallery']} />
      </Toolbar>

      <Ribbon>
        <Grip />
        <RibbonRows>
          <RibbonTabs>
            <RibbonTab $w={72}>建模</RibbonTab>
            <RibbonTab $w={72}>自由形式</RibbonTab>
            <RibbonTab $w={104}>选择</RibbonTab>
            <RibbonTab $w={72}>对象绘制</RibbonTab>
            <RibbonTab $w={16} aria-hidden="true" />
            <RibbonTab $w={57} $on>填充</RibbonTab>
            <RibbonMore aria-label="more">
              <svg width="14" height="9"><rect width="14" height="8" rx="2" fill="#ddd" /><path d="M4 2h6L7 6z" fill="#333" /></svg>
              <Arrow w={5} fill="#bbb" />
            </RibbonMore>
          </RibbonTabs>
          <RibbonPanels>
            {['定义流', '定义空闲区域', '模拟', '显示', '编辑选定对象'].map((p) => <button key={p}>{p}</button>)}
          </RibbonPanels>
        </RibbonRows>
      </Ribbon>

      <Work>
        <Strip>
          <PlayButton>▶</PlayButton>
          <LayoutButton aria-label="layout"><i /><i /><i /><i /></LayoutButton>
        </Strip>

        <Explorer>
          <ExplorerMenu>
            {['选择', '显示', '编辑', '自定义'].map((m) => <FlatButton key={m}>{m}</FlatButton>)}
          </ExplorerMenu>
          <Row>
            <SearchField aria-label="查找" />
            <Toggle $w={24} aria-label="clear">
              <svg width="10" height="10"><path d="M1 1l8 8M9 1L1 9" stroke="#aaa" strokeWidth="2" /></svg>
            </Toggle>
            <Toggle $on $w={24} $h={24} aria-label="filter"><Glyph name="filterSync" w={16} /></Toggle>
            <Divider $h={24} />
            <Toggle $w={24} $h={24} aria-label="lock"><Glyph name="lock" w={14} h={16} /></Toggle>
            <More>»</More>
          </Row>
          <ExplorerBody>
            <FilterColumn>
              {filters.map((f) => <Toggle key={f} $on aria-label={f}><Glyph name={f} w={16} /></Toggle>)}
              <hr />
              {['listAll', 'listNone', 'listInvert'].map((f) => <Toggle key={f} aria-label={f}><Glyph name={f} w={18} h={17} /></Toggle>)}
              <hr />
              {['filterOff', 'filter', 'brick'].map((f) => <Toggle key={f} aria-label={f}><Glyph name={f} w={15} h={14} /></Toggle>)}
            </FilterColumn>
            <Tree>
              <thead>
                <tr><th>名称(按升序排序)<span>▲</span></th></tr>
              </thead>
              <tbody>
                <tr>
                  <td>
                    <Glyph name="eye" w={13} h={11} />
                    <svg width="10" height="10"><circle cx="5" cy="5" r="5" fill="#ddd" /></svg>
                  </td>
                  <td>StraightStair001</td>
                </tr>
              </tbody>
            </Tree>
          </ExplorerBody>
          <SceneFooter>
            <WorkspaceName aria-label="工作区" defaultValue="工作区: 默认" />
            <Toggle $w={14} aria-label="open list"><Arrow w={5} fill="#000" /></Toggle>
            <Divider $h={24} />
            <Toggle $w={24} $h={24} aria-label="layers"><Glyph name="stack" w={14} h={15} /></Toggle>
            <Toggle $on $w={24} $h={24} aria-label="hierarchy"><Glyph name="hierarchy" w={15} h={16} /></Toggle>
            <Divider $h={24} />
            <More>»</More>
          </SceneFooter>
        </Explorer>

        <Centre>
          <Views>
            <Viewport labels={['[+]', '[顶 ]', '[标准 ]', '[线框 ]']} axis={<Axis up="y" right="x" origin="z" />}>
              <Grid />
              <TopStair />
            </Viewport>
            <Viewport labels={['[+]', '[前 ]', '[标准 ]', '[线框 ]']} cube={<FlatCube text="前" />} axis={<Axis up="z" right="x" origin="y" />}>
              <Grid />
              <FrontStair />
            </Viewport>
            <Viewport labels={['[+]', '[左 ]', '[标准 ]', '[线框 ]']} cube={<FlatCube text="左" />} axis={<Axis up="z" left="y" origin="x" />}>
              <Grid />
              <LeftStair />
            </Viewport>
            <Viewport labels={['[+]', '[透视 ]', '[标准 ]', '[默认明暗处理 ]']} shaded axis={<PerspAxis />}>
              <ShadedStair />
              <Ground />
            </Viewport>
          </Views>
          <TimeSlider>
            <button>&lt;</button>
            <button>0 / 100</button>
            <button>&gt;</button>
          </TimeSlider>
          <TrackBar>
            <TrackButton aria-label="curve editor"><Glyph name="track" w={15} h={13} /></TrackButton>
            <Ruler>
              {frames.map((f) => (
                <Tick key={f} $major={f % 5 === 0}>
                  {f === 0 && <Playhead />}
                  {f % 5 === 0 && f <= LAST_LABEL && <span>{f}</span>}
                </Tick>
              ))}
            </Ruler>
          </TrackBar>
        </Centre>

        <CommandPanel>
          <Tabs>
            {['plus', 'modify', 'tree', 'motion', 'display', 'wrench'].map((t, i) => (
              <Tab key={t} $on={i === 0} aria-label={t}><Glyph name={t} w={16} /></Tab>
            ))}
          </Tabs>
          <Categories>
            {['disc', 'shapePair', 'bulb', 'camera', 'ruler', 'waves', 'systems'].map((c) => (
              <button key={c} aria-label={c}><Glyph name={c} w={c === 'disc' ? 20 : 15} /></button>
            ))}
          </Categories>
          <SelectBox $bg="#666">
            <select aria-label="类别"><option>楼梯</option></select>
            <Arrow w={6} />
          </SelectBox>
          <Panel title="对象类型">
            <Check $h={21} $left={33}><input type="checkbox" />自动栅格</Check>
            <TypeGrid>
              {['直线楼梯', 'L 型楼梯', 'U 型楼梯', '螺旋楼梯'].map((t) => <button key={t}>{t}</button>)}
            </TypeGrid>
          </Panel>
          <Panel title="名称和颜色">
            <NameRow>
              <input aria-label="名称" />
              <Swatch type="color" aria-label="颜色" defaultValue="#8f0037" />
            </NameRow>
          </Panel>
          <Panel title="参数">
            <Groups>
              <Group $pt={4} $pb={14}>
                <legend>类型</legend>
                <Radios>
                  <label>开放式<input type="radio" name="kind" defaultChecked /></label>
                  <label>封闭式<input type="radio" name="kind" /></label>
                  <label>落地式<input type="radio" name="kind" /></label>
                </Radios>
              </Group>
              <Group $pb={3}>
                <legend>生成几何体</legend>
                <Check $left={13}><input type="checkbox" />侧弦</Check>
                <Check $left={13}><input type="checkbox" defaultChecked />支撑梁</Check>
                <RailRow><span>扶手:</span><Check><input type="checkbox" />左</Check></RailRow>
                <RailRow><Check><input type="checkbox" />右</Check></RailRow>
                <RailRow><span>扶手路径:</span><Check><input type="checkbox" />左</Check></RailRow>
                <RailRow><Check><input type="checkbox" />右</Check></RailRow>
              </Group>
              <Group $pb={10}>
                <legend>布局</legend>
                <Field id="len" label="长度:" value="34.843" />
                <Field id="wid" label="宽度:" value="7.761" />
              </Group>
              <Group $pb={10}>
                <legend>梯级</legend>
                <Field id="overall" label="总高:" value="0.0" before={<Pin aria-label="pin"><Glyph name="pin" w={12} /></Pin>} />
                <Field id="riser" label="竖板高:" value="0.0" before={<Pin aria-label="pin"><Glyph name="pin" w={12} /></Pin>} />
                <Field id="count" label="竖板数:" value="12" off before={<Pin $on aria-label="pin"><Glyph name="pinned" w={11} /></Pin>} />
              </Group>
              <Group $pb={5}>
                <legend>台阶</legend>
                <Field id="thick" label="厚度:" value="20.0" />
                <FieldRow>
                  <Check><input type="checkbox" />深度:</Check>
                  <Push />
                  <Spinner $off>
                    <input aria-label="深度" defaultValue="2.904" disabled />
                    <svg width="5" height="9" viewBox="0 0 5 9" aria-hidden="true"><path d="M0 4h5L2.500 0zM0 5h5L2.500 9z" fill="currentColor" /></svg>
                  </Spinner>
                </FieldRow>
              </Group>
            </Groups>
          </Panel>
        </CommandPanel>
      </Work>

      <Status>
        <Listener>
          <input aria-label="macro recorder" />
          <input aria-label="listener" defaultValue="欢迎使用 MAXScript" />
        </Listener>
        <Prompts>
          <p>未选定任何对象</p>
          <p>单元设置</p>
        </Prompts>
        <Coordinates>
          <CoordRow>
            <IconSlot aria-label="isolate"><Glyph name="bracket" w={16} /></IconSlot>
            <IconSlot aria-label="lock selection"><Glyph name="padlock" w={13} h={15} /></IconSlot>
            <IconSlot aria-label="offset mode"><Glyph name="offset" w={14} /></IconSlot>
            <label htmlFor="cx">X:</label><input id="cx" />
            <label htmlFor="cy">Y:</label><input id="cy" />
            <label htmlFor="cz">Z:</label><input id="cz" />
            <GridSize>栅格 = 10.0</GridSize>
          </CoordRow>
          <TagRow>
            <Glyph name="cube" w={13} h={14} />
            <button>添加时间标记</button>
          </TagRow>
        </Coordinates>
      </Status>

      <Taskbar>
        <StartButton aria-label="start"><Glyph name="windows" w={17} /></StartButton>
        <TaskSearch>
          <Glyph name="magnifier" w={16} />
          <input aria-label="搜索" placeholder="在这里输入你要搜索的内容" />
        </TaskSearch>
        {tasks.map((t) => (
          <Task key={t.icon} $running={t.running} $active={t.active} aria-label={t.icon}>
            {t.icon === 'max' ? <MaxTile><MaxLogo w={13} h={20} /></MaxTile> : <Glyph name={t.icon} w={t.icon === 'taskView' || t.icon === 'cortana' ? 20 : 24} />}
          </Task>
        ))}
      </Taskbar>

      <BrandCard>
        <BrandMark />
        <BrandText>
          <strong>土木工程网</strong>
          <a href="http://www.civilcn.com">www.civilcn.com</a>
        </BrandText>
      </BrandCard>
    </Page>
  )
}

export default App
